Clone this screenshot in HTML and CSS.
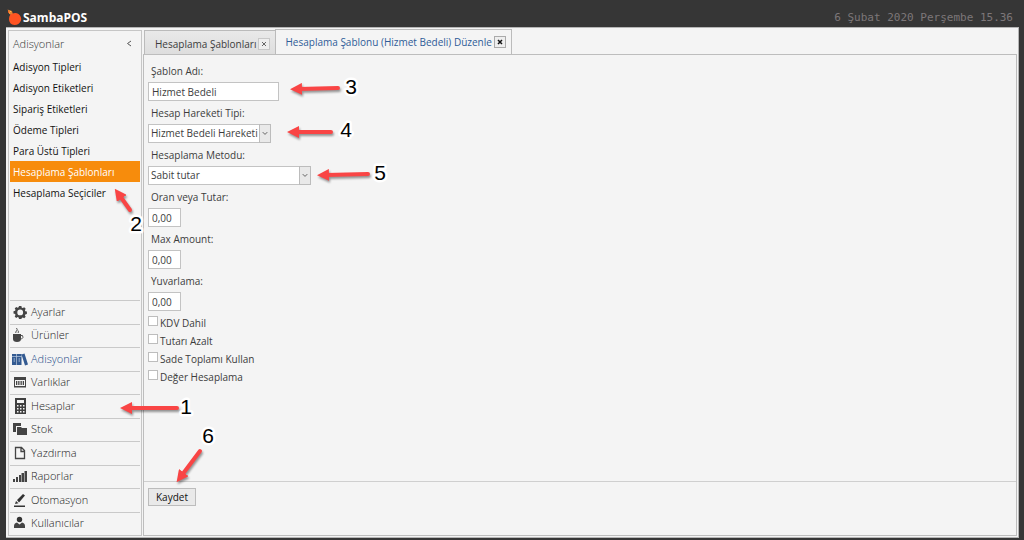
FILE: index.html
```html
<!DOCTYPE html>
<html lang="tr">
<head>
<meta charset="utf-8">
<title>SambaPOS</title>
<link rel="stylesheet" href="styles.css">
</head>
<body>
<header class="titlebar">
  <svg class="logo" width="15" height="17" viewBox="0 0 15 17" aria-hidden="true"><path d="M1 1L5 2.500L5.500 4.500Q9 3.500 11.500 5Q15 8 14 11.500Q12 16 7.500 16Q2 15.500 2 10Q2 7 3.500 5.500L1 3.500Z" fill="#ff5422"/><path d="M0.500 0.500L5 2L5.500 5L3 5.500Z" fill="#e4832f"/><path d="M3 2l1 1M2 4h1" stroke="#ffc04d"/></svg>
  <h1 class="brand">SambaPOS</h1>
  <time class="clock" datetime="2020-02-06T15:36">6 Şubat 2020 Perşembe 15.36</time>
</header>
<div class="window">
  <aside class="sidebar">
    <div class="side-head"><h2 class="side-title">Adisyonlar</h2><button class="collapse" aria-label="Daralt"><svg width="6" height="8" viewBox="0 0 6 8"><path d="M5 1L1.500 3.500L5 6" fill="none" stroke="#555"/></svg></button></div>
    <nav class="menu">
      <a href="#">Adisyon Tipleri</a>
      <a href="#">Adisyon Etiketleri</a>
      <a href="#">Sipariş Etiketleri</a>
      <a href="#">Ödeme Tipleri</a>
      <a href="#">Para Üstü Tipleri</a>
      <a href="#" class="selected" aria-current="page">Hesaplama Şablonları</a>
      <a href="#">Hesaplama Seçiciler</a>
    </nav>
    <nav class="sections">
      <a href="#"><svg viewBox="0 0 16 16"><path fill="#444" fill-rule="evenodd" d="M7 2h2.400l.4 1.700 1 .4 1.400-.8 1.500 1.500-.8 1.400.4 1 1.600.4v2.400l-1.600.4-.4 1 .8 1.400-1.500 1.500-1.400-.8-1 .4L9.400 15H7l-.4-1.500-1-.4-1.400.8-1.500-1.500.8-1.400-.4-1L1.500 9.600V7.200l1.600-.4.4-1-.8-1.400 1.500-1.500 1.400.8 1-.4zM8.200 5.500a2.900 2.900 0 1 0 0 5.800a2.900 2.900 0 0 0 0-5.800z"/></svg>Ayarlar</a>
      <a href="#"><svg viewBox="0 0 16 16"><path fill="#444" d="M1 7h8v5q0 3-4 3t-4-3z"/><path fill="none" stroke="#555" d="M9 8.500h1.500q1.500 2-1 3.500H8M4 6q-1-1 .5-2t0-3M6 6q1-1 0-2.500"/></svg>Ürünler</a>
      <a href="#" class="current"><svg viewBox="0 0 16 16"><path fill="#335a91" d="M0 3h4.500v11H0zM5 3h4.500v11H5zM9.500 3.500l3-1 3.500 11-3 1z"/><path stroke="#b9cbe3" stroke-width=".7" d="M0 5.500h9.500M2.200 7v4m5-4v4"/></svg>Adisyonlar</a>
      <a href="#"><svg viewBox="0 0 16 16"><path fill="#444" d="M2 3h12v3H2zM2 6h1v7H2zM13 6h1v7h-1zM2 12h12v1.500H2zM4 7h1.300v4H4zM6.200 7h1.300v4H6.200zM8.500 7h1.300v4H8.500zM10.700 7H12v4h-1.300z"/></svg>Varlıklar</a>
      <a href="#"><svg viewBox="0 0 16 16"><path fill="#3f3f3f" fill-rule="evenodd" d="M3 0h11v16H3zM5 2v3h7V2zM5 7v1.500h1.500V7zM8 7v1.500h1.500V7zM11 7v1.500h1.500V7zM5 10v1.500h1.500V10zM8 10v1.500h1.500V10zM11 10v1.500h1.500V10zM5 13v1.500h1.500V13zM8 13v1.500h1.500V13zM11 13v1.500h1.500V13z"/></svg>Hesaplar</a>
      <a href="#"><svg viewBox="0 0 16 16"><path fill="#444" d="M1 2h8v3H4v6H1zM5 6h4l1 1h5v7H5z"/></svg>Stok</a>
      <a href="#"><svg viewBox="0 0 16 16"><path fill="none" stroke="#444" stroke-width="1.300" d="M3.500 2.500h6l3 3v8h-9zM9 2.500v4h4"/></svg>Yazdırma</a>
      <a href="#"><svg viewBox="0 0 16 16"><path fill="#444" d="M1 11h2v3H1zM4 9h2v5H4zM7 7h2v7H7zM9.500 5H12v9H9.500zM12.500 3H15v11h-2.500z"/></svg>Raporlar</a>
      <a href="#"><svg viewBox="0 0 16 16"><path fill="#333" d="M2 13.500h11V15H2zM3 12l1-3 2.500 2.200zM5 8l6-6 2 1.500-6 7z"/></svg>Otomasyon</a>
      <a href="#"><svg viewBox="0 0 16 16"><circle cx="7.500" cy="4.500" r="2.700" fill="#333"/><path fill="#444" d="M2 13v-2q0-3 3-3.500l2.500 2L10 7.500q3 .5 3 3.500v2z"/></svg>Kullanıcılar</a>
    </nav>
  </aside>
  <main class="workspace">
    <div class="tabs" role="tablist">
      <div class="tab"><span role="tab">Hesaplama Şablonları</span><button class="close" aria-label="Kapat"><svg viewBox="0 0 6 6"><path d="M1 1l4 4M5 1l-4 4"/></svg></button></div>
      <div class="tab active"><span role="tab" aria-selected="true">Hesaplama Şablonu (Hizmet Bedeli) Düzenle</span><button class="close" aria-label="Kapat"><svg viewBox="0 0 6 6"><path d="M1 1l4 4M5 1l-4 4"/></svg></button></div>
    </div>
    <form class="panel">
      <div class="fields">
        <label class="caption" for="name">Şablon Adı:</label>
        <input class="box name" id="name" value="Hizmet Bedeli">
        <label class="caption" for="type">Hesap Hareketi Tipi:</label>
        <span class="combo type"><select class="box" id="type"><option>Hizmet Bedeli Hareketi</option></select><svg viewBox="0 0 11 17"><path d="M3 7l2.500 2.500L8 7"/></svg></span>
        <label class="caption" for="method">Hesaplama Metodu:</label>
        <span class="combo method"><select class="box" id="method"><option>Sabit tutar</option></select><svg viewBox="0 0 11 17"><path d="M3 7l2.500 2.500L8 7"/></svg></span>
        <label class="caption" for="rate">Oran veya Tutar:</label>
        <input class="box number" id="rate" value="0,00">
        <label class="caption" for="max">Max Amount:</label>
        <input class="box number" id="max" value="0,00">
        <label class="caption" for="round">Yuvarlama:</label>
        <input class="box number" id="round" value="0,00">
        <div class="checks">
          <label><input type="checkbox">KDV Dahil</label>
          <label><input type="checkbox">Tutarı Azalt</label>
          <label><input type="checkbox">Sade Toplamı Kullan</label>
          <label><input type="checkbox">Değer Hesaplama</label>
        </div>
      </div>
      <footer class="actions"><button class="save" type="button">Kaydet</button></footer>
    </form>
  </main>
</div>
<svg class="callouts" width="1024" height="540" viewBox="0 0 1024 540">
  <defs><marker id="head" viewBox="0 0 12 12" refX="3" refY="6" markerWidth="12" markerHeight="12" markerUnits="userSpaceOnUse" orient="auto"><path d="M0 0L12 6L0 12Z" fill="#f94545"/></marker></defs>
  <g class="arrows">
    <path d="M177 408H129"/>
    <path d="M130 210L120 196"/>
    <path d="M338 88L299 89"/>
    <path d="M331 132H296"/>
    <path d="M368 174L326 175"/>
    <path d="M200 451L182 475"/>
  </g>
  <g class="digits">
    <text x="186" y="414">1</text>
    <text x="136" y="231">2</text>
    <text x="351" y="94">3</text>
    <text x="346" y="137">4</text>
    <text x="380" y="180">5</text>
    <text x="208" y="443">6</text>
  </g>
</svg>
</body>
</html>
```
FILE: styles.css
```css
* { box-sizing: border-box; }

body {
  display: flex;
  flex-direction: column;
  min-height: 100vh;
  margin: 0;
  padding: 0 5px 2px 6px;
  background: #363636;
  color: #3c3c3c;
  font: 10px/16px "Open Sans", "Noto Sans", sans-serif;
}

button, input, select { font: inherit; color: inherit; }
a { color: inherit; text-decoration: none; }

.titlebar {
  display: flex;
  align-items: center;
  height: 27px;
  padding: 8px 6px 0 1px;
}
.brand {
  flex: 1;
  margin: 0 0 0 1px;
  color: #fff;
  font-size: 12px;
  line-height: 18px;
  font-weight: 700;
}
.clock {
  color: #7d7779;
  font: 11px/18px "DejaVu Sans Mono", monospace;
}

.window {
  flex: 1;
  display: flex;
  gap: 1px;
  padding: 2px 1px 1px 2px;
  border: 1px solid #b5b5b5;
  border-width: 1px 1px 1px 0;
  background: #f4f4f4;
}

.sidebar {
  display: flex;
  flex-direction: column;
  width: 134px;
  padding: 0 1px;
  border: 1px solid #c6c6c6;
}
.side-head {
  display: flex;
  align-items: center;
  justify-content: space-between;
  height: 25px;
  padding: 0 8px 0 3px;
}
.side-title {
  margin: 0;
  color: #333;
  font-size: 11px;
  font-weight: 300;
}
.collapse { display: flex; padding: 0; border: 0; background: none; }

.menu a {
  display: block;
  height: 21px;
  padding-left: 3px;
  color: #111;
  line-height: 22px;
  white-space: nowrap;
}
.menu .selected { background: #f78c0c; color: #fff; }

.sections { margin-top: auto; }
.sections a {
  display: flex;
  align-items: center;
  gap: 3px;
  height: 23px;
  padding: 0 0 2px 2px;
  border-top: 1px solid #c9c9c9;
  color: #222;
  font-size: 11px;
  font-weight: 300;
}
.sections a:nth-child(odd) { height: 24px; }
.sections .current { color: #1c4a88; }
.sections svg { width: 16px; height: 16px; }

.workspace {
  flex: 1;
  display: flex;
  flex-direction: column;
  min-width: 0;
}
.tabs { display: flex; padding-left: 1px; height: 24px; }
.tab {
  display: flex;
  align-items: center;
  gap: 2px;
  padding: 2px 5px 0 10px;
  border: 1px solid #bbb;
  border-bottom: 0;
  background: linear-gradient(#e9e9e9, #dedede);
  white-space: nowrap;
}
.tab.active {
  z-index: 1;
  height: 25px;
  margin: -1px 0 0 -1px;
  padding: 0 5px 0 9px;
  background: #f4f4f4;
  color: #2f5c98;
}
.close {
  display: flex;
  width: 12px;
  height: 12px;
  padding: 2px;
  border: 1px solid #c8c8c8;
  background: #eee;
}
.close svg { width: 6px; height: 6px; stroke: #666; }
.active .close { border-color: #aaa; }
.active .close svg { stroke: #111; stroke-width: 1.5; }

.panel {
  flex: 1;
  display: flex;
  flex-direction: column;
  margin: 0;
  border: 1px solid #bdbdbd;
}
.fields {
  flex: 1;
  display: flex;
  flex-direction: column;
  align-items: flex-start;
  padding: 4px;
}
.caption { height: 23px; padding-left: 3px; line-height: 25px; }
.box {
  height: 19px;
  padding: 0 3px;
  border: 1px solid #c3c3c3;
  border-radius: 0;
  background: #fff;
  line-height: 17px;
}
.name { width: 131px; }
.number { width: 33px; }
.combo { display: grid; height: 19px; }
.combo .box, .combo svg { grid-area: 1 / 1; }
.combo .box { width: 100%; padding: 0 2px; appearance: none; }
.combo svg {
  width: 12px;
  height: 19px;
  justify-self: end;
  border: 1px solid #bcbcbc;
  background: #e9e9e9;
  fill: none;
  stroke: #555;
  pointer-events: none;
}
.type { width: 123px; }
.method { width: 163px; }

.checks { padding-top: 3px; }
.checks label {
  display: flex;
  align-items: center;
  gap: 2px;
  height: 18px;
}
.checks input {
  appearance: none;
  width: 10px;
  height: 10px;
  margin: 0 0 4px;
  border: 1px solid #bdbdbd;
  background: #fff;
}

.actions {
  height: 54px;
  padding: 6px 4px;
  border-top: 1px solid #cfcfcf;
}
.save {
  height: 18px;
  padding: 0 7px;
  border: 1px solid #bcbcbc;
  background: #e9e9e9;
  color: #111;
  line-height: 16px;
}

.callouts {
  position: absolute;
  top: 0;
  left: 0;
  z-index: 2;
  pointer-events: none;
}
.arrows {
  fill: none;
  stroke: #f94545;
  stroke-width: 4;
  stroke-linecap: round;
  filter: drop-shadow(1px 2px 1px rgba(0, 0, 0, 0.4));
}
.arrows path { marker-end: url(#head); }
#head path { stroke: none; }
.digits {
  fill: #000;
  stroke: #fff;
  stroke-width: 5;
  stroke-linejoin: round;
  paint-order: stroke;
  font: 21px "Liberation Sans", sans-serif;
  text-anchor: middle;
}
```
